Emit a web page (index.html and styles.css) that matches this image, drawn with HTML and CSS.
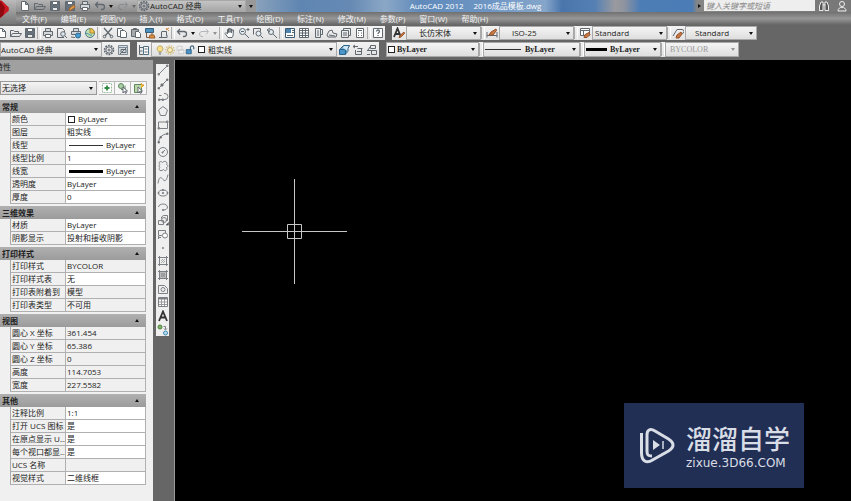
FILE: index.html
```html
<!DOCTYPE html>
<html lang="zh-CN">
<head>
<meta charset="utf-8">
<title>AutoCAD 2012</title>
<link rel="stylesheet" href="styles.css">
</head>
<body>
<svg class="sprite" aria-hidden="true">
  <symbol id="new" viewBox="0 0 12 12"><path d="M2.5 1.5h4l3 3v6h-7zM6.5 1.5v3h3" fill="#fff"/></symbol>
  <symbol id="open" viewBox="0 0 12 12"><path d="M.5 9.500v-6h3l1 1h4v2M.5 9.500l2-3h9l-2 3z"/></symbol>
  <symbol id="save" viewBox="0 0 12 12"><path d="M1.500 1.500h9v9h-9z" fill="#67717b"/><path d="M3.500 1.500h5v3h-5z" fill="#fff"/><path d="M3.500 7.500h5v3h-5z" fill="#e6e8ea"/></symbol>
  <symbol id="saveas" viewBox="0 0 12 12"><path d="M1.500 1.500h9v9h-9z" fill="#67717b"/><path d="M3.500 1.500h5v3h-5z" fill="#fff"/><path d="M5 11l1-3 4-3 1 2-4 3z" fill="#e9a24c" stroke="#a7662a"/></symbol>
  <symbol id="print" viewBox="0 0 12 12"><path d="M3.500 4v-2.500h5V4M1.500 4.500h9v4h-9z" fill="#d5d8da"/><path d="M3.500 7.500h5v3h-5z" fill="#fff"/></symbol>
  <symbol id="preview" viewBox="0 0 12 12"><path d="M8 10.500H1.500v-9h5l2 2V5"/><circle cx="7" cy="7" r="2.300" fill="#dde7ee"/><path d="M9 9l2 2"/></symbol>
  <symbol id="publish" viewBox="0 0 12 12"><path d="M3.500 4V1.500h5V4M1.500 4.500h9v3h-9z" fill="#d5d8da"/><circle cx="8" cy="8.500" r="2.500" fill="#4a9bcd" stroke="#2c6b95"/><path d="M1 10l4 .5"/></symbol>
  <symbol id="globe" viewBox="0 0 12 12"><circle cx="6" cy="6" r="4.500" fill="#c4dfb2" stroke="#4d7887"/><path d="M6 6V1.500A4.500 4.500 0 0 1 10.500 6z" fill="#eec550" stroke="#a98b33"/><path d="M2 7c2-2 3 2 6 1" stroke="#398bb3"/></symbol>
  <symbol id="cut" viewBox="0 0 12 12"><path d="M2 1l7 8M10 1L3 9" stroke-width="1.300"/><circle cx="2.500" cy="9.500" r="1.300"/><circle cx="9.500" cy="9.500" r="1.300"/></symbol>
  <symbol id="copy" viewBox="0 0 12 12"><path d="M1.500 1.500h4l2 2v6h-6z" fill="#fff"/><path d="M4.500 3.500h4l2 2v5h-6z" fill="#fff"/></symbol>
  <symbol id="paste" viewBox="0 0 12 12"><path d="M1.500 2.500h7v7h-7z" fill="#a9a9a9"/><path d="M3.500 1.500h3v1h-3z"/><path d="M5.500 4.500h3l2 2v4h-5z" fill="#fff"/></symbol>
  <symbol id="match" viewBox="0 0 12 12"><path d="M1.500 1.500h8v4h-8z" fill="#4c91bd" stroke="#365f7d"/><path d="M2.500 6v4.500h4M8 5v4" stroke="#795842"/><path d="M6 8h4l1 3H5z" fill="#dd9146" stroke="#a0632c"/></symbol>
  <symbol id="block" viewBox="0 0 12 12"><path d="M3.500 4.500h5v4M1 10.500h8V8M3.500 5v5"/><path d="M8 3l3-2M8 1l3 3" stroke="#d68b42"/></symbol>
  <symbol id="undo" viewBox="0 0 12 12"><path d="M4 2L1.500 4.500 4 7.500M2 4.500h6a2.500 2.500 0 0 1 0 5H7" stroke-width="1.300"/></symbol>
  <symbol id="redo" viewBox="0 0 12 12"><path d="M8 2l2.500 2.500L8 7.500M10 4.500H4a2.500 2.500 0 0 0 0 5h1"/></symbol>
  <symbol id="pan" viewBox="0 0 12 12"><path d="M4 10.500L1 6.500l1-1 1.500 1.500V2.500h1V5.500v-4h1.500v4-3.500h1.500V6l.5-3h1.500L9 9l-1 1.500z" fill="#fff"/></symbol>
  <symbol id="zoom" viewBox="0 0 12 12"><circle cx="4.500" cy="4.500" r="3" fill="#e4edf2"/><path d="M7 7l4 4M8.500 2.500h3M10 1v3M3 4.500h3"/></symbol>
  <symbol id="zoomwin" viewBox="0 0 12 12"><path d="M1.500 7.500v-6h7v3"/><circle cx="6.500" cy="6.500" r="2.500" fill="#e4edf2"/><path d="M8.500 8.500L11 11"/></symbol>
  <symbol id="zoomprev" viewBox="0 0 12 12"><circle cx="5" cy="5" r="2.500" fill="#e4edf2"/><path d="M7 7l4 4M4 1L1 3l3 2"/></symbol>
  <symbol id="props" viewBox="0 0 12 12"><path d="M1.500 1.500h9v9h-9z" fill="#fff" stroke="#385a75"/><path d="M2 2h5v4H2z" fill="#4d83ad" stroke="none"/><path d="M3 8.500h6M8 3.500h2M8 5.500h2"/></symbol>
  <symbol id="grid" viewBox="0 0 12 12"><path d="M1.500 1.500h9v9h-9z" fill="#fff"/><path d="M1.500 3.500h9M4.500 2v8M7.500 2v8M2 6h8M2 8.500h8"/></symbol>
  <symbol id="palette" viewBox="0 0 12 12"><path d="M3.500 1.500h5v9h-5zM8.500 2.500h2v5h-2M5 4h2M5 6h2M5 8h2"/></symbol>
  <symbol id="sheets" viewBox="0 0 12 12"><path d="M1 8l2-4 3-1 1 3 4 1-1 3H2zM3 8l6 1"/></symbol>
  <symbol id="markup" viewBox="0 0 12 12"><path d="M3.500 3.500v-2h7v7h-2M1.500 3.500h7v7h-7zM3 6h4M3 8h4"/></symbol>
  <symbol id="calc" viewBox="0 0 12 12"><path d="M2.500 1.500h7v9h-7z" fill="#fff"/><path d="M4 3.500h4M4 6h1M7 6h1M4 8.500h1M7 8.500h1"/></symbol>
  <symbol id="help" viewBox="0 0 12 12"><path d="M1.500 1.500h9v9h-9z" fill="#fff"/><path d="M4.500 4.500c0-2 3-2 3 0 0 1-1.500 1-1.500 2.500M6 8v1" stroke-width="1.300"/></symbol>
  <symbol id="gear" viewBox="0 0 12 12"><circle cx="6" cy="6" r="4.500" stroke-width="1.500" stroke-dasharray="1.800 1"/><circle cx="6" cy="6" r="3.200"/><circle cx="6" cy="6" r="1"/></symbol>
  <symbol id="custom" viewBox="0 0 12 12"><path d="M1.500 1.500h9v9h-9zM1.500 3.500h9" fill="#d5dbe0" stroke="#7c8b96"/><path d="M4 5.500h5v3H4zM3 10l6-6"/></symbol>
  <symbol id="layers" viewBox="0 0 12 12"><path d="M1.500 1v9.500h4M1.500 3.500h4M1.500 7h3"/><path d="M5.500 2.500h5v8h-5z" fill="#fff" stroke="#4d7188"/><path d="M6.500 5h3M6.500 8h3"/></symbol>
  <symbol id="bulb" viewBox="0 0 12 12"><path d="M4.500 8C1 5 3 1 6 1s5 4 1.500 7z" fill="#f9df87" stroke="#b49a4a"/><path d="M4.500 9.500h3M5 11h2"/></symbol>
  <symbol id="sun" viewBox="0 0 12 12"><circle cx="6" cy="6" r="5" stroke="#d9bd72" stroke-width="1.500" stroke-dasharray="1.500 1.500"/><circle cx="6" cy="6" r="3" fill="#faeeb9" stroke="#b59d57"/></symbol>
  <symbol id="freeze" viewBox="0 0 12 12"><path d="M2.500 1.500h6v5h-6zM4.500 5.500h6v5h-6z" stroke="#c8c8c8" fill="#eee"/></symbol>
  <symbol id="lock" viewBox="0 0 12 12"><path d="M6.500 6V3a2 2 0 0 1 4 0v2" stroke="#3f6580" stroke-width="1.400"/><path d="M1.500 5.500h6v5h-6z" fill="#4a91c3" stroke="#2d6189"/></symbol>
  <symbol id="stack" viewBox="0 0 12 12"><path d="M1.500 5.500h6v5h-6z" fill="#4b94c7" stroke="#2b628a"/><path d="M3 4l1.500-1.500h6.500L9 5v3.500L7.500 10V5.500H2z" fill="#74b2d8" stroke="#2b628a"/><path d="M4.500 3.500l1-2h6l-1.500 3v3" fill="#cfe6f4" stroke="#2b628a"/></symbol>
  <symbol id="layerprev" viewBox="0 0 12 12"><path d="M1 2.500h5M3 1L1 2.500 3 4M5.500 4.500h5M3.500 6v4.500h6v-6M5 7.500h4"/></symbol>
  <symbol id="layerstate" viewBox="0 0 12 12"><path d="M4.500 1.500h5v3h-5zM1 6.500h5M5.500 6.500h5v4h-5zM1 10.500h3M2 6l2-3"/></symbol>
  <symbol id="textstyle" viewBox="0 0 12 12"><path d="M1 10L4.500 1.500 7.500 9M2.500 7h4" stroke-width="1.800" stroke="#333"/><path d="M6 10.500l1-2L11 5l.5 1.500L8 10z" fill="#c77a45" stroke="#96522b"/></symbol>
  <symbol id="dimstyle" viewBox="0 0 12 12"><path d="M1 5v5.500M11 5v5.500M1 8.500h10"/><path d="M3 8l2-3 5-3 .5 1.500L7 8z" fill="#c77a45" stroke="#96522b"/></symbol>
  <symbol id="tablestyle" viewBox="0 0 12 12"><path d="M1.500 1.500h9v7h-9zM1.500 3.500h9M4.500 3v5" fill="#fff"/><path d="M5 10.500l1-3 4-2 1 2-3 3z" fill="#c77a45" stroke="#96522b"/></symbol>
  <symbol id="leader" viewBox="0 0 12 12"><path d="M1 9l4-6.500h5M10 2.500a2 2 0 0 1 0 4"/><path d="M4 11l1-3 4-3 1 2-3 4z" fill="#c77a45" stroke="#96522b"/></symbol>
  <symbol id="pickadd" viewBox="0 0 12 12"><path d="M1.500 1.500h9v9h-9z" fill="#fff" stroke="#9cbda0" stroke-dasharray="2 1"/><path d="M6 3.500v5M3.500 6h5" stroke="#308a42" stroke-width="1.800"/></symbol>
  <symbol id="select" viewBox="0 0 12 12"><circle cx="4" cy="4" r="2.500" fill="#a8cfa5" stroke="#60865e"/><path d="M4 7.500h4v-4" stroke="#60865e"/><path d="M6 5v6l1.500-1.500 1 2 1-.5-1-2h2z" fill="#fff"/></symbol>
  <symbol id="quick" viewBox="0 0 12 12"><path d="M1.500 2.500h7v8h-7z" fill="#b8d6aa" stroke="#60865e"/><path d="M8 1l1 2h2L8 6" fill="#ffc23b" stroke="#d99720"/><path d="M5 5v6l1.500-1.500 1 2 1-.5-1-2h2z" fill="#fff"/></symbol>
  <symbol id="line" viewBox="0 0 12 12"><path d="M1.500 10.500l9-9"/><path d="M1 9.500h1.500V11H1zM9.500 1H11v1.500H9.500z"/></symbol>
  <symbol id="xline" viewBox="0 0 12 12"><path d="M1.500 10.500l9-9"/><path d="M1 9.500h1.500V11H1zM9.500 1H11v1.500H9.500zM4 6h2v2H4z" fill="#444"/></symbol>
  <symbol id="pline" viewBox="0 0 12 12"><path d="M2 4.500h2.500M7 2.500h1a2.500 2.500 0 0 1 0 6H2.500"/><path d="M1.500 8h1.500v1.500H1.500zM5 8h1.500v1.500H5z"/></symbol>
  <symbol id="polygon" viewBox="0 0 12 12"><path d="M6 1.500l4.500 3.500-2 5.500h-5l-2-5.500z"/></symbol>
  <symbol id="rect" viewBox="0 0 12 12"><path d="M1.500 3h9v6.500h-9z"/><path d="M1 8.500h1.500V10H1zM9.500 2H11v1.500H9.500z"/></symbol>
  <symbol id="arc" viewBox="0 0 12 12"><path d="M1.500 10.500Q2 3 10.500 1.500"/><path d="M1 9.500h1.500V11H1zM9.500 1H11v1.500H9.500zM3 4.500h1.500V6H3z" fill="#444"/></symbol>
  <symbol id="circle" viewBox="0 0 12 12"><circle cx="6" cy="6" r="4.500"/><path d="M5.500 6.500l2.500-2.500M5 6h1v1H5z"/></symbol>
  <symbol id="cloud" viewBox="0 0 12 12"><path d="M3 4.500C.5 2 4 .5 5.500 2.500 8 0 11 2 9.500 4.500c2 1 2 2 0 3C11 10 8 12 6.500 9.500 4 12 .5 10 3 7.500c-1.500-1-1.500-2 0-3z"/></symbol>
  <symbol id="spline" viewBox="0 0 12 12"><path d="M1 10.500C2 3 4 4 6 6.500S9.500 8 11 1.500"/></symbol>
  <symbol id="ellipse" viewBox="0 0 12 12"><ellipse cx="6" cy="6" rx="4.500" ry="3"/><path d="M5.500 5.500h1v1h-1zM1 5.500h1v1H1zM10 5.500h1v1h-1zM5.500 2.500h1v1h-1z" fill="#444"/></symbol>
  <symbol id="earc" viewBox="0 0 12 12"><path d="M1.500 6C2 2 10 2 10.500 6c0 2-2 3-4 3"/><path d="M5.500 8.500h1v1h-1z" fill="#444"/></symbol>
  <symbol id="insert" viewBox="0 0 12 12"><path d="M4.500 4.500V3l2-1.500h4v5H9M1.500 6.500h5v4h-5z"/><circle cx="7" cy="6" r="2.500"/><path d="M9 11l2.500-2.500V11z" fill="#222"/></symbol>
  <symbol id="mkblock" viewBox="0 0 12 12"><path d="M1.500 2.500h7V5M1.500 2.500v5H5M1 9.500h3M1.500 8v3"/><circle cx="8" cy="7.500" r="2.500" fill="#fff"/></symbol>
  <symbol id="point" viewBox="0 0 12 12"><path d="M5.500 5.500h1v1h-1z"/></symbol>
  <symbol id="hatch" viewBox="0 0 12 12"><path d="M2.500 1v10M9.500 1v10M1 2.500h10M1 9.500h10"/><path d="M4 8l4-4M4 6l2-2M6 8l2-2" stroke="#aaa"/></symbol>
  <symbol id="gradient" viewBox="0 0 12 12"><path d="M3 3h6v6H3z" fill="#bbb" stroke="none"/><path d="M2.500 1v10M9.500 1v10M1 2.500h10M1 9.500h10M4 5h4M4 7h4"/></symbol>
  <symbol id="region" viewBox="0 0 12 12"><path d="M1.500 2.500h6l3 3v5h-9z"/><circle cx="6" cy="6.500" r="2"/></symbol>
  <symbol id="table" viewBox="0 0 12 12"><path d="M1.500 1.500h9v9h-9z" fill="#fff"/><path d="M2 2.500h8" stroke-width="2"/><path d="M4.500 3v7M7.500 3v7M2 6h8M2 8.500h8" stroke="#999"/></symbol>
  <symbol id="mtext" viewBox="0 0 12 12"><path d="M2 11L6 1.500 10 11M3.500 7.500h5" stroke="#333" stroke-width="1.800"/></symbol>
  <symbol id="addsel" viewBox="0 0 12 12"><circle cx="3" cy="3" r="2" fill="#80b468" stroke="#4b8339"/><path d="M6.500 2.500h2v3M7 4.500l1.500 1.500L10 4.500"/><circle cx="8.500" cy="9" r="2" fill="#b9dced" stroke="#3c8bb3"/></symbol>
  <symbol id="find" viewBox="0 0 12 12"><path d="M1.500 10.500V6L3 2h2v8.500zM7 10.500V2h2l1.500 4v4.500zM5 5h2" stroke="#eee" fill="#555"/></symbol>
  <symbol id="user" viewBox="0 0 12 12"><circle cx="6" cy="4" r="2.500" fill="#777" stroke="#eee"/><path d="M2 11c0-5 8-5 8 0z" fill="#777" stroke="#eee"/></symbol>
</svg>

<header class="titlebar">
  <button class="app" aria-label="应用程序菜单"><svg viewBox="0 0 20 24"><path d="M0 0h2l9 9v4L0 22z" fill="#c91820"/><path d="M0 0l6 9-2 10-4 3z" fill="#8e090f"/></svg></button>
  <div class="quick">
    <button aria-label="新建"><svg><use href="#new"/></svg></button>
    <button aria-label="打开"><svg><use href="#open"/></svg></button>
    <button aria-label="保存"><svg><use href="#save"/></svg></button>
    <button aria-label="另存为"><svg><use href="#saveas"/></svg></button>
    <button aria-label="打印"><svg><use href="#print"/></svg></button>
    <button aria-label="放弃"><svg><use href="#undo"/></svg></button>
    <button class="drop" aria-label="放弃列表"></button>
    <button class="dim" aria-label="重做"><svg><use href="#redo"/></svg></button>
    <button class="drop dim" aria-label="重做列表"></button>
  </div>
  <label class="combo space"><svg><use href="#gear"/></svg><select aria-label="工作空间"><option>AutoCAD 经典</option></select></label>
  <button class="drop more" aria-label="自定义"></button>
  <h1><span>AutoCAD 2012</span><span>2016成品模板.dwg</span></h1>
  <div class="search"><button class="play" aria-label="展开"></button><input type="search" aria-label="搜索" placeholder="键入关键字或短语"></div>
  <button class="ticon" aria-label="查找"><svg><use href="#find"/></svg></button>
  <button class="ticon" aria-label="登录"><svg><use href="#user"/></svg></button>
</header>

<nav class="menu">
  <a href="#">文件(F)</a><a href="#">编辑(E)</a><a href="#">视图(V)</a><a href="#">插入(I)</a><a href="#">格式(O)</a><a href="#">工具(T)</a><a href="#">绘图(D)</a><a href="#">标注(N)</a><a href="#">修改(M)</a><a href="#">参数(P)</a><a href="#">窗口(W)</a><a href="#">帮助(H)</a>
</nav>

<div class="bars">
  <div class="row">
    <div class="bar std">
      <button aria-label="新建"><svg><use href="#new"/></svg></button>
      <button aria-label="打开"><svg><use href="#open"/></svg></button>
      <button aria-label="保存"><svg><use href="#save"/></svg></button>
      <i class="sep"></i>
      <button aria-label="打印"><svg><use href="#print"/></svg></button>
      <button aria-label="打印预览"><svg><use href="#preview"/></svg></button>
      <button aria-label="发布"><svg><use href="#publish"/></svg></button>
      <button aria-label="三维DWF"><svg><use href="#globe"/></svg></button>
      <i class="sep"></i>
      <button aria-label="剪切"><svg><use href="#cut"/></svg></button>
      <button aria-label="复制"><svg><use href="#copy"/></svg></button>
      <button aria-label="粘贴"><svg><use href="#paste"/></svg></button>
      <button aria-label="特性匹配"><svg><use href="#match"/></svg></button>
      <button aria-label="块编辑器"><svg><use href="#block"/></svg></button>
      <i class="sep"></i>
      <button aria-label="放弃"><svg><use href="#undo"/></svg></button>
      <button class="drop" aria-label="放弃列表"></button>
      <button class="dim" aria-label="重做"><svg><use href="#redo"/></svg></button>
      <button class="drop dim" aria-label="重做列表"></button>
      <i class="sep"></i>
      <button aria-label="平移"><svg><use href="#pan"/></svg></button>
      <button aria-label="实时缩放"><svg><use href="#zoom"/></svg></button>
      <button aria-label="窗口缩放"><svg><use href="#zoomwin"/></svg></button>
      <button aria-label="缩放上一个"><svg><use href="#zoomprev"/></svg></button>
      <i class="sep"></i>
      <button aria-label="特性"><svg><use href="#props"/></svg></button>
      <button aria-label="设计中心"><svg><use href="#grid"/></svg></button>
      <button aria-label="工具选项板"><svg><use href="#palette"/></svg></button>
      <button aria-label="图纸集"><svg><use href="#sheets"/></svg></button>
      <button aria-label="标记集"><svg><use href="#markup"/></svg></button>
      <button aria-label="计算器"><svg><use href="#calc"/></svg></button>
      <i class="sep"></i>
      <button aria-label="帮助"><svg><use href="#help"/></svg></button>
    </div>
    <div class="bar">
      <button aria-label="文字样式"><svg><use href="#textstyle"/></svg></button>
      <label class="combo style"><select aria-label="文字样式"><option>长仿宋体</option></select></label>
      <i class="sep"></i>
      <button aria-label="标注样式"><svg><use href="#dimstyle"/></svg></button>
      <label class="combo style"><select aria-label="标注样式"><option>ISO-25</option></select></label>
      <i class="sep"></i>
      <button aria-label="表格样式"><svg><use href="#tablestyle"/></svg></button>
      <label class="combo style near"><select aria-label="表格样式"><option>Standard</option></select></label>
      <i class="sep"></i>
      <button aria-label="引线样式"><svg><use href="#leader"/></svg></button>
      <label class="combo style last"><select aria-label="引线样式"><option>Standard</option></select></label>
    </div>
  </div>
  <div class="row second">
    <div class="bar">
      <label class="combo work"><select aria-label="工作空间"><option>AutoCAD 经典</option></select></label>
      <button aria-label="工作空间设置"><svg><use href="#gear"/></svg></button>
      <button aria-label="我的工作空间"><svg><use href="#custom"/></svg></button>
    </div>
    <div class="bar">
      <button aria-label="图层特性"><svg><use href="#layers"/></svg></button>
      <label class="combo layer"><svg><use href="#bulb"/></svg><svg><use href="#sun"/></svg><svg><use href="#freeze"/></svg><svg><use href="#lock"/></svg><i class="swatch"></i><select aria-label="图层"><option>粗实线</option></select></label>
      <button aria-label="置为当前"><svg><use href="#stack"/></svg></button>
      <button aria-label="上一个图层"><svg><use href="#layerprev"/></svg></button>
      <button aria-label="图层状态"><svg><use href="#layerstate"/></svg></button>
    </div>
    <div class="bar serif">
      <label class="combo color"><i class="swatch"></i><select aria-label="颜色"><option>ByLayer</option></select></label>
      <i class="sep"></i>
      <label class="combo ltype"><i class="thin"></i><select aria-label="线型"><option>ByLayer</option></select></label>
      <i class="sep"></i>
      <label class="combo lweight"><i class="thick"></i><select aria-label="线宽"><option>ByLayer</option></select></label>
      <i class="sep"></i>
      <label class="combo plot"><select aria-label="打印样式" disabled><option>BYCOLOR</option></select></label>
    </div>
  </div>
</div>

<main>
  <aside class="panel">
    <h2>特性</h2>
    <div class="pick">
      <label class="combo"><select aria-label="选择对象"><option>无选择</option></select></label>
      <button aria-label="切换 PICKADD"><svg><use href="#pickadd"/></svg></button>
      <button aria-label="选择对象"><svg><use href="#select"/></svg></button>
      <button aria-label="快速选择"><svg><use href="#quick"/></svg></button>
    </div>
    <section>
      <h3><button>常规</button></h3>
      <table>
        <tr><th>颜色</th><td><i class="swatch"></i>ByLayer</td></tr>
        <tr><th>图层</th><td>粗实线</td></tr>
        <tr><th>线型</th><td><i class="thin"></i>ByLayer</td></tr>
        <tr><th>线型比例</th><td>1</td></tr>
        <tr><th>线宽</th><td><i class="thick"></i>ByLayer</td></tr>
        <tr><th>透明度</th><td>ByLayer</td></tr>
        <tr><th>厚度</th><td>0</td></tr>
      </table>
    </section>
    <section>
      <h3><button>三维效果</button></h3>
      <table>
        <tr><th>材质</th><td>ByLayer</td></tr>
        <tr><th>阴影显示</th><td>投射和接收阴影</td></tr>
      </table>
    </section>
    <section>
      <h3><button>打印样式</button></h3>
      <table>
        <tr class="ro"><th>打印样式</th><td>BYCOLOR</td></tr>
        <tr><th>打印样式表</th><td>无</td></tr>
        <tr class="ro"><th>打印表附着到</th><td>模型</td></tr>
        <tr class="ro"><th>打印表类型</th><td>不可用</td></tr>
      </table>
    </section>
    <section>
      <h3><button>视图</button></h3>
      <table>
        <tr class="ro"><th>圆心 X 坐标</th><td>361.454</td></tr>
        <tr class="ro"><th>圆心 Y 坐标</th><td>65.386</td></tr>
        <tr class="ro"><th>圆心 Z 坐标</th><td>0</td></tr>
        <tr class="ro"><th>高度</th><td>114.7053</td></tr>
        <tr class="ro"><th>宽度</th><td>227.5582</td></tr>
      </table>
    </section>
    <section>
      <h3><button>其他</button></h3>
      <table>
        <tr><th>注释比例</th><td>1:1</td></tr>
        <tr><th>打开 UCS 图标</th><td>是</td></tr>
        <tr><th>在原点显示 U...</th><td>是</td></tr>
        <tr><th>每个视口都显...</th><td>是</td></tr>
        <tr class="ro"><th>UCS 名称</th><td></td></tr>
        <tr><th>视觉样式</th><td>二维线框</td></tr>
      </table>
    </section>
  </aside>
  <div class="dock">
    <div class="draw">
      <button aria-label="直线"><svg><use href="#line"/></svg></button>
      <button aria-label="构造线"><svg><use href="#xline"/></svg></button>
      <button aria-label="多段线"><svg><use href="#pline"/></svg></button>
      <button aria-label="正多边形"><svg><use href="#polygon"/></svg></button>
      <button aria-label="矩形"><svg><use href="#rect"/></svg></button>
      <button aria-label="圆弧"><svg><use href="#arc"/></svg></button>
      <button aria-label="圆"><svg><use href="#circle"/></svg></button>
      <button aria-label="修订云线"><svg><use href="#cloud"/></svg></button>
      <button aria-label="样条曲线"><svg><use href="#spline"/></svg></button>
      <button aria-label="椭圆"><svg><use href="#ellipse"/></svg></button>
      <button aria-label="椭圆弧"><svg><use href="#earc"/></svg></button>
      <button aria-label="插入块"><svg><use href="#insert"/></svg></button>
      <button aria-label="创建块"><svg><use href="#mkblock"/></svg></button>
      <button aria-label="点"><svg><use href="#point"/></svg></button>
      <button aria-label="图案填充"><svg><use href="#hatch"/></svg></button>
      <button aria-label="渐变色"><svg><use href="#gradient"/></svg></button>
      <button aria-label="面域"><svg><use href="#region"/></svg></button>
      <button aria-label="表格"><svg><use href="#table"/></svg></button>
      <button aria-label="多行文字"><svg><use href="#mtext"/></svg></button>
      <button aria-label="添加选定对象"><svg><use href="#addsel"/></svg></button>
    </div>
  </div>
  <div class="canvas">
    <svg class="cross" viewBox="0 0 105 105"><path d="M0 52.500h105M52.500 0v105M45.500 45.500h14v14h-14z"/></svg>
    <div class="mark">
      <svg viewBox="0 0 36 38"><path d="M2.500 6v20c0 8 5 11 11 7l16-9c6-4 6-8 0-12L16 4C11 1 8 3 8 8v16c0 4 1 5 5 5" fill="none" stroke="#d9dde6" stroke-width="3"/><path d="M14 13l7 5-7 5z" fill="#d9dde6" stroke="none"/><path d="M24 14v8" stroke="#d9dde6" stroke-width="1.500"/></svg>
      <p><b>溜溜自学</b><span>zixue.3D66.COM</span></p>
    </div>
  </div>
</main>
</body>
</html>
```
FILE: styles.css
```css
* { box-sizing: border-box; }
body {
  margin: 0;
  height: 100vh;
  display: flex;
  flex-direction: column;
  overflow: hidden;
  background: #666;
  color: #222;
  font: 8px/12px "Open Sans", "Noto Sans CJK SC", sans-serif;
}
h1, h2, h3, p { margin: 0; font: inherit; }
button {
  display: flex;
  align-items: center;
  justify-content: center;
  flex: none;
  width: 14px;
  padding: 0;
  border: 0;
  background: none;
  color: inherit;
  font: inherit;
}
svg { flex: none; width: 12px; height: 12px; fill: none; stroke: #606870; }
.sprite { position: absolute; width: 0; height: 0; }
.dim { opacity: .4; }
.drop { width: 8px; }
.drop::after, .combo::after {
  content: "";
  flex: none;
  border: 2px solid transparent;
  border-top: 3px solid #111;
  border-bottom: 0;
}
.combo {
  display: flex;
  align-items: center;
  padding: 0 3px;
  border: 1px solid #a8a8a8;
  background: linear-gradient(#f4f4f4, #dedede);
}
.combo select {
  flex: 1;
  min-width: 0;
  height: 12px;
  padding: 0;
  border: 0;
  appearance: none;
  background: none;
  color: inherit;
  font: inherit;
  opacity: 1;
}
.swatch { flex: none; width: 7px; height: 7px; border: 1px solid #222; background: #fff; }
.thin { flex: none; height: 1px; background: #333; }
.thick { flex: none; height: 3px; background: #000; }

.titlebar {
  display: flex;
  flex: none;
  height: 12px;
  background: linear-gradient(90deg, #999 0, #aaa 250px, #87a0bb 258px, #5f86b2 300px, #6589b3 350px, #8ba7c6 385px, #5f8abb 420px, #6e96c4 490px, #86a6ca 545px, #4a75ac 562px, #5580b4 595px, #9a9a9f 615px, #8f949f 624px, #4d7db5 640px, #4b7cb5 692px, #858585 697px, #777);
}
.app { align-items: flex-start; justify-content: flex-start; width: 16px; height: 24px; background: linear-gradient(#bbb, #777); z-index: 1; }
.app svg { width: 16px; height: 20px; stroke: none; }
.quick { display: flex; flex: none; width: 121px; padding-left: 1px; background: linear-gradient(#b5b5b5, #8d8d8d); }
.quick button { width: 15px; }
.quick .drop { width: 8px; }
.space { flex: none; width: 109px; padding-left: 0; background: linear-gradient(#c4c4c4, #a8a8a8); }
.more { width: 10px; background: #999; }
.titlebar h1 { display: flex; flex: 1; justify-content: center; gap: 10px; color: #fff; line-height: 11px; }
.search { display: flex; flex: none; width: 120px; }
.search input { flex: 1; min-width: 0; height: 11px; padding: 0 2px; border: 0; background: #eee; font: italic 8px/11px "Open Sans", "Noto Sans CJK SC", sans-serif; }
.search input::placeholder { color: #888; }
.play { width: 9px; }
.play::after { content: ""; border: 2px solid transparent; border-left: 3px solid #111; border-right: 0; }
.ticon { width: 18px; }

.menu {
  display: flex;
  flex: none;
  gap: 14px;
  height: 13px;
  padding-left: 22px;
  background: linear-gradient(#707070, #969696 50%, #666);
  line-height: 13px;
}
.menu a { color: #f2f2f2; text-decoration: none; }

.bars { display: flex; flex-direction: column; flex: none; gap: 2px; padding: 1px 0 3px; }
.row { display: flex; gap: 7px; height: 14px; }
.second { height: 15px; }
.bar { display: flex; flex: none; background: linear-gradient(#f2f2f2, #e2e2e2); }
.std { margin-left: -5px; }
.sep { flex: none; width: 4px; border-left: 1px solid #aaa; border-right: 1px solid #fff; margin: 1px 0; }
.style { width: 75px; padding-left: 12px; }
.near { padding-left: 2px; }
.last { width: 72px; padding-left: 9px; }
.work { width: 102px; padding-left: 0; }
.layer { width: 186px; }
.layer svg { width: 10px; height: 10px; }
.layer .swatch { margin: 0 3px; }
.serif { font-family: "Liberation Serif", serif; font-weight: bold; }
.color { width: 93px; padding-left: 1px; gap: 2px; }
.ltype { width: 97px; padding-left: 1px; gap: 4px; }
.ltype .thin { width: 36px; }
.lweight { width: 77px; padding-left: 1px; gap: 3px; }
.lweight .thick { width: 21px; }
.plot { width: 74px; padding-left: 4px; color: #999; font-weight: normal; }
.plot::after { opacity: .4; }

main { display: flex; flex: 1; min-height: 0; }
.panel { flex: none; width: 153px; background: #f0f0f0; overflow: hidden; }
.panel h2 { height: 14px; background: #a0a0a0; line-height: 14px; margin-left: -5px; }
.pick { display: flex; height: 14px; margin: 7px 6px 5px 0; }
.pick .combo { flex: 1; margin-right: 2px; padding-left: 1px; border-color: #999; }
.pick button { width: 16px; border: 1px solid #b8b8b8; border-left-width: 0; background: #f7f7f7; }
section { width: 146px; margin-bottom: 2px; }
h3 button {
  justify-content: space-between;
  width: 100%;
  height: 13px;
  padding: 0 7px 0 2px;
  background: linear-gradient(#b0b0b0, #9b9b9b);
  font-weight: bold;
}
h3 button::after { content: ""; border: 2px solid transparent; border-bottom: 3px solid #111; border-top: 0; }
table { width: 136px; margin-left: 10px; border-collapse: separate; border-spacing: 0; table-layout: fixed; border-left: 1px solid #aaa; }
th, td { height: 13px; padding: 0 0 0 1px; border: solid #b0b0b0; border-width: 0 1px 1px 0; line-height: 12px; white-space: nowrap; overflow: hidden; }
th { width: 55px; font-weight: normal; text-align: left; }
td { background: #fff; }
.ro td { background: #f0f0f0; }
td .swatch, td .thin, td .thick { display: inline-block; vertical-align: middle; margin: 0 3px 0 1px; }
td .thin, td .thick { width: 34px; margin-left: 2px; }

.dock { flex: none; width: 22px; padding: 4px 5px 0 3px; border-right: 1px solid #999; background: #666; }
.draw { display: flex; flex-direction: column; justify-content: space-between; height: 272px; background: #efefef; }
.draw svg { stroke: #7c8084; }
.canvas { position: relative; flex: 1; background: #000; }
.cross { position: absolute; left: 67px; top: 119px; width: 105px; height: 105px; stroke: #c8c8c8; }
.mark {
  position: absolute;
  right: 47px;
  bottom: 13px;
  display: flex;
  align-items: center;
  gap: 11px;
  width: 180px;
  height: 85px;
  padding-left: 15px;
  background: #222f55;
  color: #d9dde6;
}
.mark svg { width: 36px; height: 38px; }
.mark p { padding-bottom: 4px; }
.mark b, .mark span { display: block; }
.mark b { font: 500 26px/38px "Noto Sans CJK SC", sans-serif; }
.mark span { font: 12px/12px "DejaVu Sans", sans-serif; }
```
